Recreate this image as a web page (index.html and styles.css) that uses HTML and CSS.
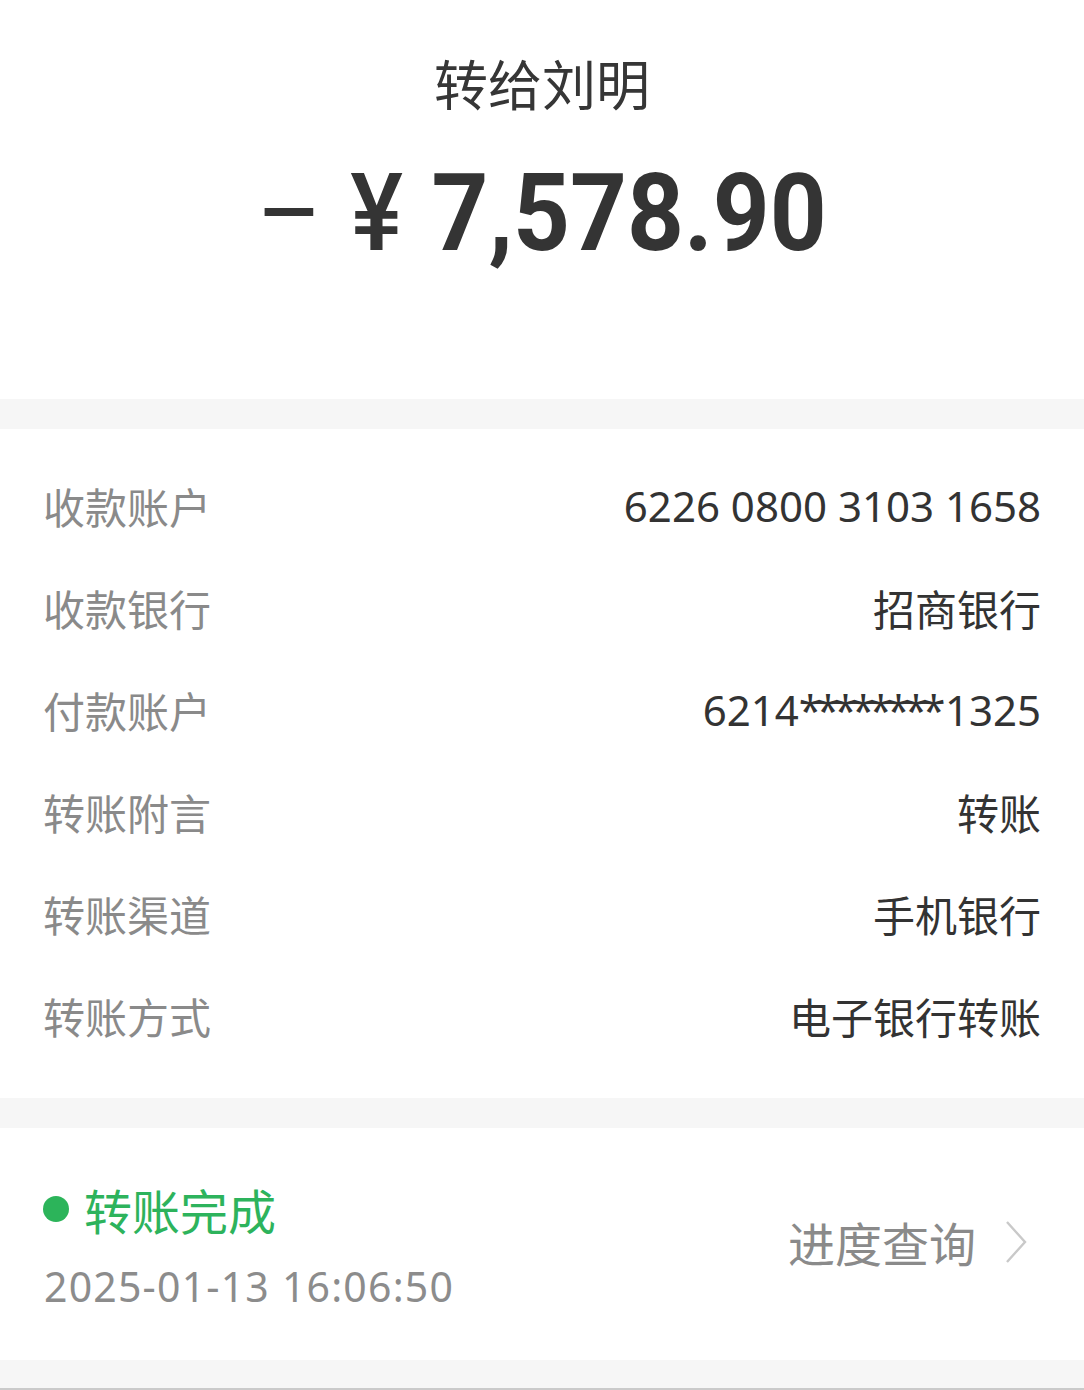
FILE: index.html
```html
<!DOCTYPE html>
<html lang="zh">
<head>
<meta charset="utf-8">
<title>转账详情</title>
<link rel="stylesheet" href="styles.css">
</head>
<body>
<div class="page">
  <section class="header">
    <div class="title">转给刘明</div>
    <div class="amount"><span class="amount-inner"><span class="minus">–</span> <span class="yen">¥</span> 7,578.90</span></div>
  </section>
  <div class="band"></div>
  <section class="details">
    <div class="row"><span class="label">收款账户</span><span class="value num">6226 0800 3103 1658</span></div>
    <div class="row"><span class="label">收款银行</span><span class="value">招商银行</span></div>
    <div class="row"><span class="label">付款账户</span><span class="value num">6214<span class="stars">********</span>1325</span></div>
    <div class="row"><span class="label">转账附言</span><span class="value">转账</span></div>
    <div class="row"><span class="label">转账渠道</span><span class="value">手机银行</span></div>
    <div class="row"><span class="label">转账方式</span><span class="value">电子银行转账</span></div>
  </section>
  <div class="band"></div>
  <section class="status">
    <div class="status-left">
      <div class="state"><span class="dot"></span>转账完成</div>
      <div class="date">2025-01-13 16:06:50</div>
    </div>
    <div class="progress">进度查询
      <svg class="chev" width="24" height="44" viewBox="0 0 24 44"><path d="M3 2 L21 22 L3 42" fill="none" stroke="#c9c9c9" stroke-width="2.4"/></svg>
    </div>
  </section>
  <div class="band bottom"></div>
</div>
</body>
</html>
```
FILE: styles.css
```css
html, body {
  margin: 0;
  padding: 0;
  background: #ffffff;
}
body {
  font-family: "Noto Sans", "Noto Sans CJK SC", sans-serif;
  color: #333333;
}
.page {
  width: 1084px;
  height: 1390px;
  display: flex;
  flex-direction: column;
  overflow: hidden;
}
.header {
  height: 400px;
  display: flex;
  flex-direction: column;
  align-items: center;
}
.title {
  margin-top: 48px;
  font-size: 54px;
  line-height: 70px;
  height: 70px;
  color: #363636;
  font-family: "Noto Sans CJK SC", sans-serif;
}
.amount {
  margin-top: 30px;
  height: 130px;
  display: flex;
  justify-content: center;
  align-items: center;
}
.amount-inner {
  display: inline-block;
  font-family: Roboto, "Liberation Sans", sans-serif;
  font-weight: 700;
  font-size: 108px;
  line-height: 130px;
  color: #343434;
  transform: scaleX(0.92);
  white-space: nowrap;
  word-spacing: 4px;
}
.minus {
  font-weight: 400;
}
.yen {
  font-weight: 500;
}
.band {
  height: 30px;
  background: #f6f6f6;
  flex: none;
}
.band.bottom {
  height: 28px;
  border-bottom: 2px solid #cacaca;
}
.details {
  height: 670px;
  padding: 25px 43px 0 43px;
  box-sizing: border-box;
  display: flex;
  flex-direction: column;
}
.row {
  height: 102px;
  display: flex;
  justify-content: space-between;
  align-items: center;
  font-size: 42px;
}
.label {
  color: #8a8a8a;
  font-family: "Noto Sans CJK SC", sans-serif;
}
.value {
  color: #333333;
  font-family: "Noto Sans CJK SC", sans-serif;
}
.value.num {
  font-family: "Noto Sans", sans-serif;
}
.stars {
  letter-spacing: -5.5px;
  margin-right: 5px;
}
.status {
  height: 232px;
  padding: 50px 56px 0 43px;
  display: flex;
  justify-content: space-between;
  align-items: flex-start;
  box-sizing: border-box;
}
.status-left {
  display: flex;
  flex-direction: column;
  gap: 16px;
}
.state {
  display: flex;
  align-items: center;
  color: #2db35c;
  font-size: 48px;
  line-height: 62px;
  font-family: "Noto Sans CJK SC", sans-serif;
}
.dot {
  width: 26px;
  height: 26px;
  border-radius: 50%;
  background: #2cb45a;
  margin-right: 15px;
}
.date {
  color: #8c8c8c;
  font-size: 41px;
  line-height: 60px;
  font-family: "Noto Sans", sans-serif;
  letter-spacing: 1.2px;
  padding-left: 1px;
}
.progress {
  display: flex;
  align-items: center;
  color: #8a8a8a;
  font-size: 47px;
  line-height: 66px;
  font-family: "Noto Sans CJK SC", sans-serif;
  gap: 28px;
  margin-top: 31px;
}
.chev {
  display: block;
}
```
